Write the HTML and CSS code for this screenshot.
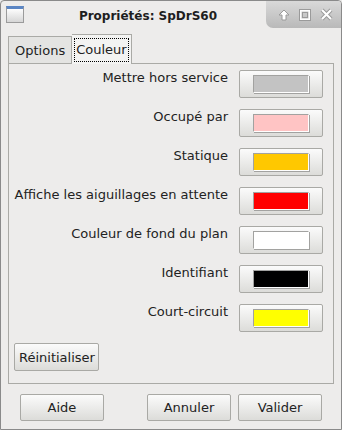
FILE: index.html
```html
<!DOCTYPE html>
<html lang="fr">

<head>
    <meta charset="UTF-8">
    <title>Propriétés: SpDrS60</title>
    <link rel="stylesheet" href="styles.css">
</head>

<body>
    <div class="window">
        <div class="titlebar">
            <div class="win-icon"></div>
            <div class="title">Propriétés: SpDrS60</div>
            <div class="win-controls">
                <svg width="12" height="12" viewBox="0 0 12 12">
                    <path d="M6 1 L11 6 L8 6 L8 11 L4 11 L4 6 L1 6 Z" fill="#fff" stroke="#9a9a9a" stroke-width="1"/>
                </svg>
                <svg width="12" height="12" viewBox="0 0 12 12">
                    <rect x="1.5" y="1.5" width="9" height="9" fill="none" stroke="#fff" stroke-width="2"/>
                    <rect x="0.5" y="0.5" width="11" height="11" fill="none" stroke="#9a9a9a" stroke-width="1"/>
                    <rect x="3.5" y="3.5" width="5" height="5" fill="none" stroke="#9a9a9a" stroke-width="1"/>
                </svg>
                <svg width="13" height="13" viewBox="0 0 13 13">
                    <path d="M2 2 L11 11 M11 2 L2 11" stroke="#9a9a9a" stroke-width="4"/>
                    <path d="M2 2 L11 11 M11 2 L2 11" stroke="#fff" stroke-width="2"/>
                </svg>
            </div>
        </div>

        <div class="tabs">
            <div class="tab">Options</div>
            <div class="tab active"><span class="focus">Couleur</span></div>
        </div>

        <div class="panel">
            <div class="row">
                <div class="label">Mettre hors service</div>
                <button class="color-btn"><span class="swatch" style="background:#c3c3c3"></span></button>
            </div>
            <div class="row">
                <div class="label">Occupé par</div>
                <button class="color-btn"><span class="swatch" style="background:#ffc4c4"></span></button>
            </div>
            <div class="row">
                <div class="label">Statique</div>
                <button class="color-btn"><span class="swatch" style="background:#ffc800"></span></button>
            </div>
            <div class="row">
                <div class="label">Affiche les aiguillages en attente</div>
                <button class="color-btn"><span class="swatch" style="background:#ff0000"></span></button>
            </div>
            <div class="row">
                <div class="label">Couleur de fond du plan</div>
                <button class="color-btn"><span class="swatch" style="background:#ffffff"></span></button>
            </div>
            <div class="row">
                <div class="label">Identifiant</div>
                <button class="color-btn"><span class="swatch" style="background:#000000"></span></button>
            </div>
            <div class="row">
                <div class="label">Court-circuit</div>
                <button class="color-btn"><span class="swatch" style="background:#ffff00"></span></button>
            </div>
            <div class="reset-row">
                <button class="btn reset">Réinitialiser</button>
            </div>
        </div>

        <div class="footer">
            <button class="btn wide">Aide</button>
            <div class="spacer"></div>
            <button class="btn wide">Annuler</button>
            <button class="btn wide">Valider</button>
        </div>
    </div>
</body>

</html>
```

FILE: styles.css
```css
html, body {
    margin: 0;
    padding: 0;
}

body {
    font-family: "DejaVu Sans", sans-serif;
    font-size: 13px;
    color: #222;
    background: #edeceb;
}

.window {
    width: 342px;
    height: 430px;
    box-sizing: border-box;
    border: 1px solid #8a8a8a;
    border-radius: 4px 4px 0 0;
    background: #edeceb;
    overflow: hidden;
}

/* ---- title bar ---- */
.titlebar {
    height: 27px;
    display: flex;
    align-items: flex-start;
}

.win-icon {
    width: 18px;
    height: 17px;
    margin: 5px 0 0 5px;
    box-sizing: border-box;
    border: 1px solid #9b9b9b;
    border-top: 3px solid #5b86c4;
    background: linear-gradient(#fdfdfd, #d6d6d6);
}

.title {
    flex: 1;
    text-align: center;
    font-weight: bold;
    font-size: 12px;
    line-height: 16px;
    margin-top: 7px;
    padding-left: 6px;
    color: #1e1e1e;
}

.win-controls {
    width: 75px;
    height: 27px;
    box-sizing: border-box;
    display: flex;
    align-items: center;
    justify-content: space-between;
    padding: 0 8px 0 12px;
    background: linear-gradient(#d9d9d9, #b9b9b9);
    border-bottom-left-radius: 7px;
}

/* ---- tabs ---- */
.tabs {
    display: flex;
    align-items: flex-end;
    height: 35px;
    padding-left: 7px;
    box-sizing: border-box;
}

.tab {
    height: 27px;
    padding: 0 6px;
    box-sizing: border-box;
    border: 1px solid #aaaaa6;
    border-bottom: none;
    background: #e4e4e2;
    line-height: 27px;
}

.tab.active {
    height: 30px;
    padding: 3px 2px 0 2px;
    background: #f3f3f2;
    border-left: none;
    margin-bottom: -1px;
    line-height: 22px;
}

.focus {
    display: inline-block;
    border: 1px dotted #000;
    padding: 0 1px;
    line-height: 22px;
}

/* ---- panel ---- */
.panel {
    margin: 0 7px;
    height: 321px;
    box-sizing: border-box;
    border: 1px solid #aaaaa6;
    padding: 6px 10px 0 5px;
    display: flex;
    flex-direction: column;
    gap: 11px;
}

.row {
    display: flex;
    justify-content: flex-end;
    gap: 11px;
    height: 28px;
}

.label {
    line-height: 16px;
    text-align: right;
    white-space: nowrap;
}

button {
    font-family: inherit;
    font-size: 13px;
    color: #222;
}

.color-btn,
.btn {
    height: 28px;
    box-sizing: border-box;
    border: 1px solid #a9a9a5;
    border-radius: 2px;
    background: linear-gradient(#fbfbfb, #dcdcd9);
    padding: 0;
}

.color-btn {
    width: 84px;
    display: flex;
    align-items: flex-start;
    justify-content: center;
    padding-top: 4px;
}

.swatch {
    display: block;
    width: 56px;
    height: 18px;
    box-sizing: border-box;
    border: 1px solid;
    border-color: #a2a2a0 #fff #fff #a2a2a0;
    box-shadow: 1px 1px 0 #a2a2a0;
}

.reset-row {
    display: flex;
}

.reset {
    padding: 0 4px;
    width: 85px;
}

/* ---- footer ---- */
.footer {
    display: flex;
    gap: 7px;
    padding: 10px 19px 0 19px;
}

.footer .btn {
    height: 27px;
}

.wide {
    width: 84px;
}

.spacer {
    flex: 1;
}
```
